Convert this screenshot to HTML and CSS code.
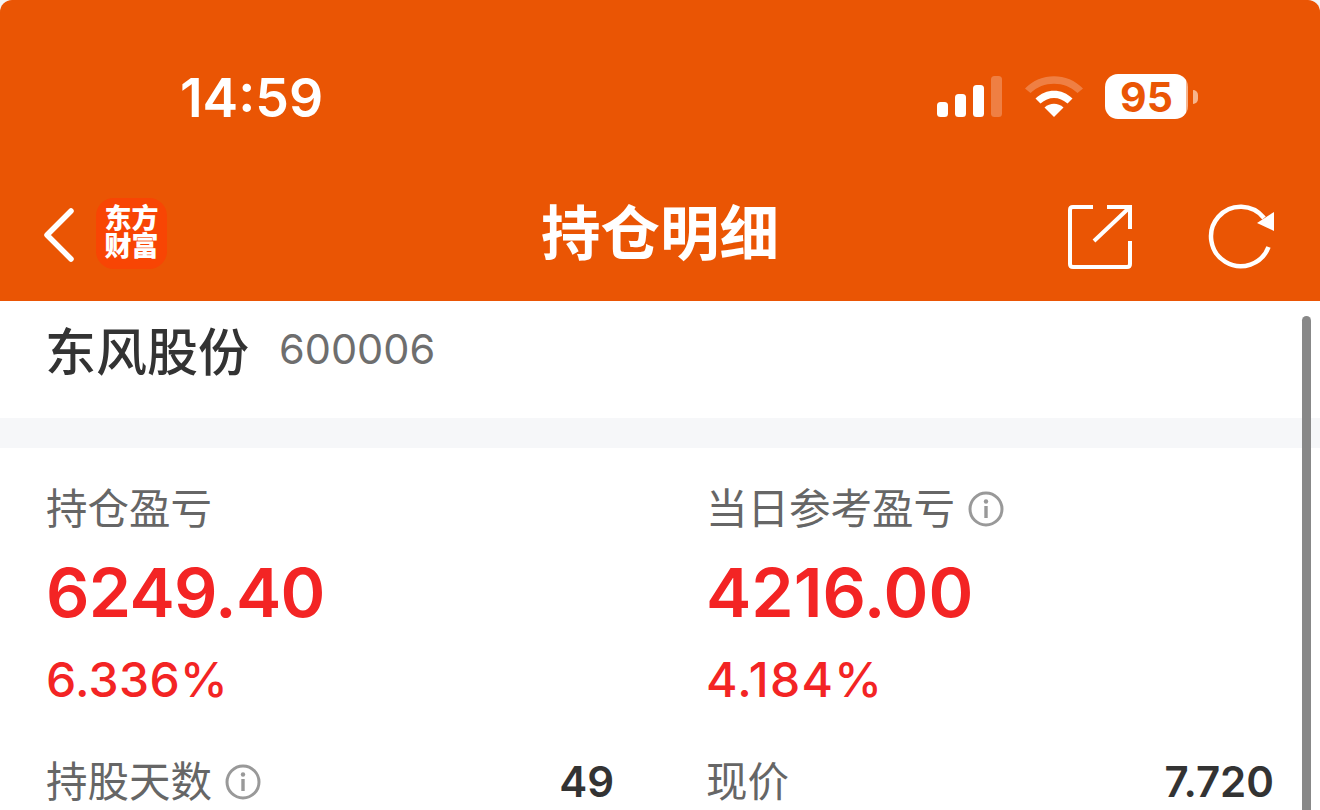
FILE: index.html
```html
<!DOCTYPE html>
<html lang="zh-CN">
<head>
    <meta charset="UTF-8">
    <meta name="viewport" content="width=device-width, initial-scale=1.0">
    <title>持仓明细</title>
    <link rel="stylesheet" href="styles.css">
</head>
<body>

<div class="screen">
    <header class="header">
        <!-- status bar -->
        <div class="status-bar">
            <span class="time">14:59</span>
            <div class="status-icons">
                <svg class="signal" width="65" height="41" viewBox="0 0 65 41">
                    <rect x="0" y="26" width="11" height="15" rx="3.5" fill="#fff"/>
                    <rect x="18" y="18" width="11" height="23" rx="3.5" fill="#fff"/>
                    <rect x="36" y="9" width="11" height="32" rx="3.5" fill="#fff"/>
                    <rect x="54" y="0" width="11" height="41" rx="3.5" fill="#fff" opacity="0.25"/>
                </svg>
                <svg class="wifi" width="58" height="41" viewBox="0 0 58 41">
                    <path d="M0 12.500C15.500 -4 42.500 -4 58 12.500L52.500 17C40 4.500 18 4.500 5.500 17Z" fill="#fff" opacity="0.25"/>
                    <path d="M10.500 22.500C21 12 37 12 47.500 22.500L42.500 27.500C34.500 20 23.500 20 15.500 27.500Z" fill="#fff"/>
                    <path d="M19.500 31.500C25 26.500 33 26.500 38.500 31.500L29 41Z" fill="#fff"/>
                </svg>
                <div class="battery">
                    <div class="battery-body"><span class="battery-level">95</span></div>
                    <div class="battery-nub"></div>
                </div>
            </div>
        </div>

        <!-- title row -->
        <div class="nav-bar">
            <div class="nav-left">
                <svg width="31" height="60" viewBox="0 0 31 60">
                    <path d="M27 8L3 32L27 56" fill="none" stroke="#fff" stroke-width="5.500" stroke-linecap="round" stroke-linejoin="round"/>
                </svg>
                <div class="logo"><div class="logo-text">东方<br>财富</div></div>
            </div>
            <h1 class="nav-title">持仓明细</h1>
            <div class="nav-right">
                <svg class="share" width="64" height="64" viewBox="0 0 64 64">
                    <path d="M25 2H5Q2 2 2 5V59Q2 62 5 62H59Q62 62 62 59V36M62 24V2H39M62 2L26 36" fill="none" stroke="#fff" stroke-width="4"/>
                </svg>
                <svg width="66" height="72" viewBox="0 0 66 72">
                    <path d="M56 21A29.700 29.700 0 1 0 60.500 50" fill="none" stroke="#fff" stroke-width="4.500"/>
                    <path d="M49 26L66 15V34Z" fill="#fff"/>
                </svg>
            </div>
        </div>
    </header>

    <section class="stock">
        <span class="stock-name">东风股份</span>
        <span class="stock-code">600006</span>
    </section>

    <div class="divider"></div>

    <section class="detail">
        <div class="summary">
            <div class="label">持仓盈亏</div>
            <div class="amount">6249.40</div>
            <div class="percent">6.336%</div>
        </div>
        <div class="summary summary-today">
            <div class="label">当日参考盈亏
                <svg class="info" width="36" height="36" viewBox="0 0 36 36">
                    <circle cx="18" cy="18" r="16" fill="none" stroke="#999" stroke-width="3"/>
                    <circle cx="18" cy="10.500" r="2.200" fill="#999"/>
                    <rect x="16.300" y="15" width="3.400" height="12" fill="#999"/>
                </svg>
            </div>
            <div class="amount">4216.00</div>
            <div class="percent">4.184%</div>
        </div>
        <div class="row">
            <div class="label">持股天数
                <svg class="info" width="36" height="36" viewBox="0 0 36 36">
                    <circle cx="18" cy="18" r="16" fill="none" stroke="#999" stroke-width="3"/>
                    <circle cx="18" cy="10.500" r="2.200" fill="#999"/>
                    <rect x="16.300" y="15" width="3.400" height="12" fill="#999"/>
                </svg>
            </div>
            <div class="row-value">49</div>
        </div>
        <div class="row">
            <div class="label">现价</div>
            <div class="row-value">7.720</div>
        </div>
    </section>

    <div class="scrollbar"></div>
</div>

</body>
</html>
```

FILE: styles.css
```css
html, body {
    margin: 0;
    height: 100%;
    background-color: #f4f4f4;
    overflow: hidden;
}
body {
    font-family: Inter, "Noto Sans CJK SC", sans-serif;
    color: #333;
}
.screen {
    position: relative;
    height: 810px;
    overflow: hidden;
    background-color: #fff;
    border-radius: 12px 12px 0 0;
}

/* orange header */
.header {
    height: 301px;
    background-color: #ea5504;
    color: #fff;
}
.status-bar {
    height: 195px;
    display: flex;
    justify-content: space-between;
    align-items: flex-start;
    padding: 0 122px 0 180px;
    box-sizing: border-box;
}
.time {
    margin-top: 67px;
    font-size: 53.500px;
    line-height: 62px;
    font-weight: 600;
}
.status-icons {
    display: flex;
    align-items: flex-start;
    margin-top: 74px;
}
.signal {
    margin-top: 2px;
}
.wifi {
    margin: 2px 0 0 23px;
}
.battery {
    display: flex;
    align-items: center;
    margin-left: 22px;
}
.battery-body {
    width: 83px;
    height: 45px;
    border-radius: 13px;
    background: linear-gradient(to right, #fff 97%, #f7b48c 97%);
    display: flex;
    align-items: center;
    justify-content: center;
}
.battery-level {
    font-size: 41px;
    font-weight: 700;
    color: #ea5504;
}
.battery-nub {
    width: 5px;
    height: 14px;
    margin-left: 5px;
    border-radius: 0 7px 7px 0;
    background-color: #f7b48c;
}
.nav-bar {
    position: relative;
    height: 76px;
    display: flex;
    align-items: center;
    justify-content: space-between;
    padding: 0 46px 0 44px;
}
.nav-left {
    display: flex;
    align-items: center;
    gap: 21px;
}
.logo {
    width: 71px;
    height: 71px;
    border-radius: 18px;
    background-color: #f84504;
    display: flex;
    align-items: center;
    justify-content: center;
}
.logo-text {
    font-size: 27px;
    line-height: 28px;
    font-weight: 900;
    text-align: center;
}
.nav-title {
    margin: 0;
    font-size: 59.500px;
    line-height: 76px;
    font-weight: 700;
    position: absolute;
    left: 0;
    right: 0;
    text-align: center;
}
.nav-right {
    display: flex;
    align-items: center;
    gap: 76px;
}
.share {
    margin-top: 7px;
}

/* stock name */
.stock {
    height: 117px;
    padding: 0 45px 22px;
    box-sizing: border-box;
    display: flex;
    align-items: center;
    gap: 30px;
}
.stock-name {
    font-size: 51px;
    font-weight: 500;
}
.stock-code {
    font-size: 41.500px;
    color: #6e6e6e;
}
.divider {
    height: 30px;
    background-color: #f6f7f9;
}

/* numbers */
.detail {
    display: grid;
    grid-template-columns: 568px 568px;
    column-gap: 92px;
    padding: 36px 46px 0;
}
.label {
    display: flex;
    align-items: center;
    gap: 13px;
    font-size: 41.500px;
    line-height: 50px;
    color: #666;
}
.amount {
    margin-top: 16px;
    font-size: 68px;
    line-height: 84px;
    letter-spacing: -0.700px;
    font-weight: 600;
    color: #f32424;
}
.percent {
    margin-top: 18px;
    font-size: 48px;
    line-height: 56px;
    letter-spacing: 0.300px;
    font-weight: 500;
    color: #f32424;
}
.summary-today .amount {
    letter-spacing: 0;
}
.summary-today .percent {
    letter-spacing: 1.300px;
}
.row {
    display: flex;
    justify-content: space-between;
    align-items: center;
    margin-top: 49px;
}
.row-value {
    font-size: 42px;
    line-height: 50px;
    font-weight: 600;
}

.scrollbar {
    position: absolute;
    top: 316px;
    right: 9px;
    bottom: 0;
    width: 9px;
    border-radius: 5px 5px 0 0;
    background-color: #888;
}
```
